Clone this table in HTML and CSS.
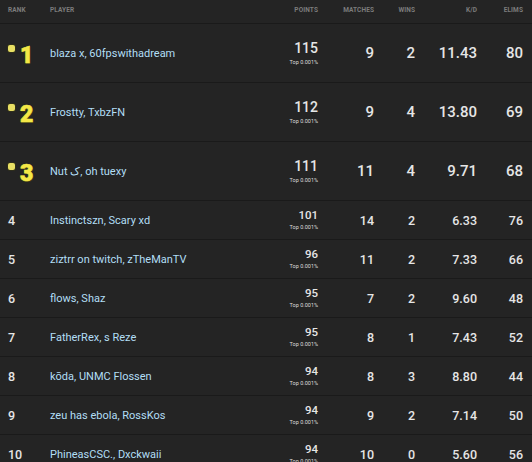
FILE: index.html
```html
<!DOCTYPE html>
<html>
<head>
<meta charset="utf-8">
<link rel="stylesheet" href="styles.css">
</head>
<body>
<div class="board">
  <div class="row head">
    <div class="c rank">Rank</div>
    <div class="c player">Player</div>
    <div class="c num">Points</div>
    <div class="c num">Matches</div>
    <div class="c num">Wins</div>
    <div class="c num">K/D</div>
    <div class="c num">Elims</div>
  </div>

  <div class="row top">
    <div class="c rank"><span class="badge"></span><span class="big">1</span></div>
    <div class="c player">blaza x, 60fpswithadream</div>
    <div class="c num pts"><span class="p">115</span><span class="pct">Top 0.001%</span></div>
    <div class="c num">9</div>
    <div class="c num">2</div>
    <div class="c num">11.43</div>
    <div class="c num">80</div>
  </div>
  <div class="row top">
    <div class="c rank"><span class="badge"></span><span class="big">2</span></div>
    <div class="c player">Frostty, TxbzFN</div>
    <div class="c num pts"><span class="p">112</span><span class="pct">Top 0.001%</span></div>
    <div class="c num">9</div>
    <div class="c num">4</div>
    <div class="c num">13.80</div>
    <div class="c num">69</div>
  </div>
  <div class="row top">
    <div class="c rank"><span class="badge"></span><span class="big">3</span></div>
    <div class="c player">Nut ک, oh tuexy</div>
    <div class="c num pts"><span class="p">111</span><span class="pct">Top 0.001%</span></div>
    <div class="c num">11</div>
    <div class="c num">4</div>
    <div class="c num">9.71</div>
    <div class="c num">68</div>
  </div>

  <div class="row">
    <div class="c rank">4</div>
    <div class="c player">Instinctszn, Scary xd</div>
    <div class="c num pts"><span class="p">101</span><span class="pct">Top 0.001%</span></div>
    <div class="c num">14</div>
    <div class="c num">2</div>
    <div class="c num">6.33</div>
    <div class="c num">76</div>
  </div>
  <div class="row">
    <div class="c rank">5</div>
    <div class="c player">ziztrr on twitch, zTheManTV</div>
    <div class="c num pts"><span class="p">96</span><span class="pct">Top 0.001%</span></div>
    <div class="c num">11</div>
    <div class="c num">2</div>
    <div class="c num">7.33</div>
    <div class="c num">66</div>
  </div>
  <div class="row">
    <div class="c rank">6</div>
    <div class="c player">flows, Shaz</div>
    <div class="c num pts"><span class="p">95</span><span class="pct">Top 0.001%</span></div>
    <div class="c num">7</div>
    <div class="c num">2</div>
    <div class="c num">9.60</div>
    <div class="c num">48</div>
  </div>
  <div class="row">
    <div class="c rank">7</div>
    <div class="c player">FatherRex, s Reze</div>
    <div class="c num pts"><span class="p">95</span><span class="pct">Top 0.001%</span></div>
    <div class="c num">8</div>
    <div class="c num">1</div>
    <div class="c num">7.43</div>
    <div class="c num">52</div>
  </div>
  <div class="row">
    <div class="c rank">8</div>
    <div class="c player">kōda, UNMC Flossen</div>
    <div class="c num pts"><span class="p">94</span><span class="pct">Top 0.001%</span></div>
    <div class="c num">8</div>
    <div class="c num">3</div>
    <div class="c num">8.80</div>
    <div class="c num">44</div>
  </div>
  <div class="row">
    <div class="c rank">9</div>
    <div class="c player">zeu has ebola, RossKos</div>
    <div class="c num pts"><span class="p">94</span><span class="pct">Top 0.001%</span></div>
    <div class="c num">9</div>
    <div class="c num">2</div>
    <div class="c num">7.14</div>
    <div class="c num">50</div>
  </div>
  <div class="row">
    <div class="c rank">10</div>
    <div class="c player">PhineasCSC., Dxckwaii</div>
    <div class="c num pts"><span class="p">94</span><span class="pct">Top 0.001%</span></div>
    <div class="c num">10</div>
    <div class="c num">0</div>
    <div class="c num">5.60</div>
    <div class="c num">56</div>
  </div>
</div>
</body>
</html>
```

FILE: styles.css
```css
* { box-sizing: border-box; }
html, body {
  margin: 0;
  padding: 0;
  background: #242424;
  font-family: Roboto, "Liberation Sans", sans-serif;
  overflow: hidden;
}
.board {
  width: 532px;
}
.row {
  display: grid;
  grid-template-columns: 50px 220px 48px 56px 41px 62px 46px;
  padding-right: 9px;
  height: 39px;
  align-items: center;
  border-bottom: 1px solid #1a1a1a;
  color: #e6e6e6;
  font-size: 12.5px;
  font-weight: 500;
}
.row.top {
  height: 59px;
  font-size: 15px;
}
.c.rank {
  padding-left: 8px;
  display: flex;
  align-items: center;
}
.c.player {
  color: #b2def5;
  font-size: 11px;
  font-weight: 400;
}
.c.num {
  text-align: right;
}
.row.head {
  height: 24px;
  align-items: start;
  padding-top: 6px;
}
.row.head .c {
  font-size: 6.5px;
  font-weight: 700;
  color: #7c7c7c;
  text-transform: uppercase;
  letter-spacing: 0.1px;
}
.pts {
  display: flex;
  flex-direction: column;
  align-items: flex-end;
  line-height: 1;
}
.pts .p {
  font-size: 11.5px;
}
.row.top .pts .p {
  font-size: 14px;
}
.pct {
  font-size: 5.5px;
  font-weight: 400;
  color: #dcdcdc;
  margin-top: 3px;
}
.row.top .pct {
  margin-top: 5px;
}
.badge {
  width: 7px;
  height: 7px;
  background: #e9e064;
  border-radius: 2px;
  box-shadow: 0 0 0 1px #2f2f1c;
  align-self: flex-start;
  margin-top: 5px;
  margin-right: 5px;
}
.big {
  font-family: Roboto, sans-serif;
  font-weight: 900;
  font-size: 23px;
  color: #f4e847;
  line-height: 1;
  margin-top: 4px;
  -webkit-text-stroke: 0.6px #f4e847;
  text-shadow: 1px 1px 0 #3b3a16, -1px 0 0 #3b3a16, 0 1px 0 #3b3a16;
}
```
